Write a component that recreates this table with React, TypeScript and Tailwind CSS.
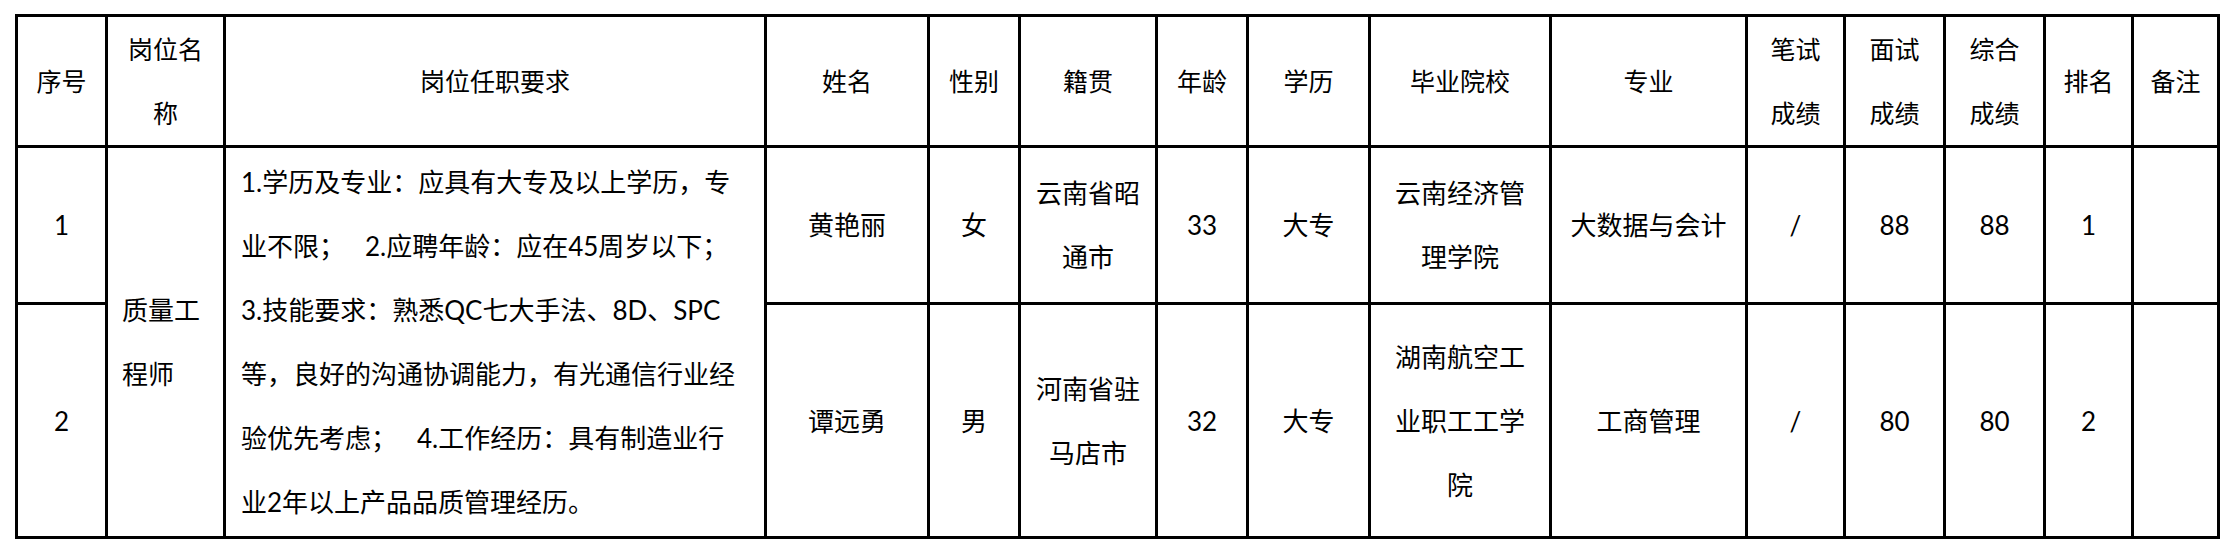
import type { ReactNode } from "react";

const cell = "border-[3px] border-black text-center align-middle";

function Lines({ items }: { items: string[] }) {
  return (
    <>
      {items.map((t, i) => (
        <span key={i} className="block">
          {t}
        </span>
      ))}
    </>
  );
}

const headers: ReactNode[] = [
  "序号",
  <Lines items={["岗位名", "称"]} />,
  "岗位任职要求",
  "姓名",
  "性别",
  "籍贯",
  "年龄",
  "学历",
  "毕业院校",
  "专业",
  <Lines items={["笔试", "成绩"]} />,
  <Lines items={["面试", "成绩"]} />,
  <Lines items={["综合", "成绩"]} />,
  "排名",
  "备注",
];

const requirement = [
  "1.学历及专业：应具有大专及以上学历，专",
  "业不限；\u00a0\u00a0 2.应聘年龄：应在45周岁以下；",
  "3.技能要求：熟悉QC七大手法、8D、SPC",
  "等，良好的沟通协调能力，有光通信行业经",
  "验优先考虑；\u00a0\u00a0 4.工作经历：具有制造业行",
  "业2年以上产品品质管理经历。",
];

type Person = {
  no: string;
  name: string;
  sex: string;
  origin: string[];
  age: string;
  edu: string;
  school: string[];
  major: string;
  written: string;
  interview: string;
  total: string;
  rank: string;
  height: string;
};

const people: Person[] = [
  {
    no: "1",
    name: "黄艳丽",
    sex: "女",
    origin: ["云南省昭", "通市"],
    age: "33",
    edu: "大专",
    school: ["云南经济管", "理学院"],
    major: "大数据与会计",
    written: "/",
    interview: "88",
    total: "88",
    rank: "1",
    height: "h-[157px]",
  },
  {
    no: "2",
    name: "谭远勇",
    sex: "男",
    origin: ["河南省驻", "马店市"],
    age: "32",
    edu: "大专",
    school: ["湖南航空工", "业职工工学", "院"],
    major: "工商管理",
    written: "/",
    interview: "80",
    total: "80",
    rank: "2",
    height: "h-[234px]",
  },
];

export default function App() {
  return (
    <div className="min-h-screen bg-white pt-[14px] pl-[15px] font-['Lato','Noto_Sans_CJK_SC',sans-serif] text-[26px] leading-[64px] text-black">
      <table className="w-[2205px] table-fixed border-collapse">
        <colgroup>
          <col className="w-[90px]" />
          <col className="w-[118px]" />
          <col className="w-[541px]" />
          <col className="w-[163px]" />
          <col className="w-[91px]" />
          <col className="w-[137px]" />
          <col className="w-[91px]" />
          <col className="w-[122px]" />
          <col className="w-[181px]" />
          <col className="w-[196px]" />
          <col className="w-[98px]" />
          <col className="w-[100px]" />
          <col className="w-[100px]" />
          <col className="w-[88px]" />
          <col className="w-[86px]" />
        </colgroup>
        <thead>
          <tr>
            {headers.map((h, i) => (
              <td key={i} className={`${cell} h-[129px] text-[25px]`}>
                {h}
              </td>
            ))}
          </tr>
        </thead>
        <tbody>
          {people.map((p, i) => (
            <tr key={p.no}>
              <td className={`${cell} ${p.height}`}>{p.no}</td>
              {i === 0 && (
                <>
                  <td rowSpan={2} className={`${cell} pl-[14px] text-left`}>
                    <Lines items={["质量工", "程师"]} />
                  </td>
                  <td rowSpan={2} className={`${cell} pl-[15px] text-left`}>
                    <Lines items={requirement} />
                  </td>
                </>
              )}
              <td className={cell}>{p.name}</td>
              <td className={cell}>{p.sex}</td>
              <td className={cell}>
                <Lines items={p.origin} />
              </td>
              <td className={cell}>{p.age}</td>
              <td className={cell}>{p.edu}</td>
              <td className={cell}>
                <Lines items={p.school} />
              </td>
              <td className={cell}>{p.major}</td>
              <td className={cell}>{p.written}</td>
              <td className={cell}>{p.interview}</td>
              <td className={cell}>{p.total}</td>
              <td className={cell}>{p.rank}</td>
              <td className={cell}></td>
            </tr>
          ))}
        </tbody>
      </table>
    </div>
  );
}
